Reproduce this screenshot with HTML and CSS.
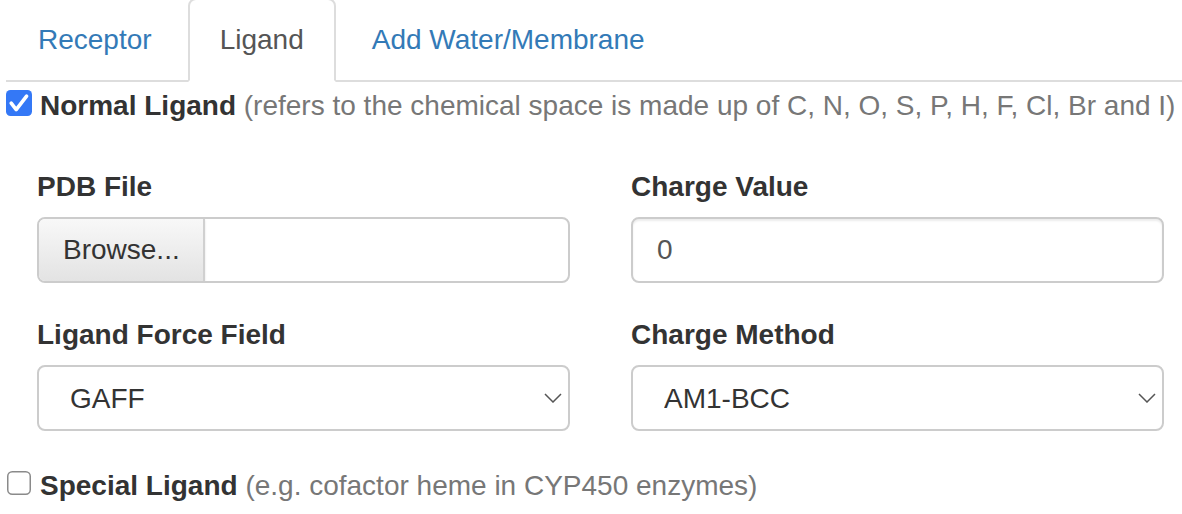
FILE: index.html
```html
<!DOCTYPE html>
<html lang="en">
<head>
<meta charset="utf-8">
<title>Ligand</title>
<link rel="stylesheet" href="styles.css">
</head>
<body>
<div class="page">
  <ul class="tabs">
    <li class="tab"><a href="#">Receptor</a></li>
    <li class="tab active"><a href="#">Ligand</a></li>
    <li class="tab"><a href="#">Add Water/Membrane</a></li>
  </ul>

  <div class="check-line">
    <svg class="cb cb-on" width="26" height="26" viewBox="0 0 26 26" aria-hidden="true">
      <rect x="0" y="0" width="26" height="26" rx="4.5" fill="#3478f6"/>
      <path d="M5.2 13.2 L10.2 19.6 L20.6 6.2" fill="none" stroke="#fff" stroke-width="3.6" stroke-linecap="round" stroke-linejoin="round"/>
    </svg>
    <span class="check-text"><b>Normal Ligand</b> <span class="muted">(refers to the chemical space is made up of C, N, O, S, P, H, F, Cl, Br and I)</span></span>
  </div>

  <div class="form-grid">
    <div class="group">
      <label class="lbl">PDB File</label>
      <div class="file-input">
        <span class="browse">Browse...</span>
        <span class="file-name"></span>
      </div>
    </div>
    <div class="group">
      <label class="lbl">Charge Value</label>
      <input class="control" type="text" value="0">
    </div>
    <div class="group">
      <label class="lbl">Ligand Force Field</label>
      <div class="select-wrap">
        <select class="control select"><option>GAFF</option></select>
        <svg class="chev" width="18" height="10" viewBox="0 0 18 10" aria-hidden="true">
          <path d="M1 1 L9 9 L17 1" fill="none" stroke="#555" stroke-width="1.5"/>
        </svg>
      </div>
    </div>
    <div class="group">
      <label class="lbl">Charge Method</label>
      <div class="select-wrap">
        <select class="control select"><option>AM1-BCC</option></select>
        <svg class="chev" width="18" height="10" viewBox="0 0 18 10" aria-hidden="true">
          <path d="M1 1 L9 9 L17 1" fill="none" stroke="#555" stroke-width="1.5"/>
        </svg>
      </div>
    </div>
  </div>

  <div class="check-line special">
    <svg class="cb cb-off" width="26" height="26" viewBox="0 0 26 26" aria-hidden="true">
      <rect x="1.75" y="1.75" width="22.5" height="22.5" rx="4.5" fill="#fff" stroke="#8a8a8a" stroke-width="1.5"/>
    </svg>
    <span class="check-text"><b>Special Ligand</b> <span class="muted">(e.g. cofactor heme in CYP450 enzymes)</span></span>
  </div>
</div>
</body>
</html>
```

FILE: styles.css
```css
html, body {
  margin: 0;
  padding: 0;
  background: #fff;
}

body {
  font-family: "Liberation Sans", Arial, Helvetica, sans-serif;
  font-size: 28px;
  line-height: 40px;
  color: #333;
  overflow: hidden;
}

.page {
  padding-left: 6px;
}

.tabs {
  display: flex;
  list-style: none;
  margin: -2px 0 0 0;
  padding: 0;
  border-bottom: 2px solid #ddd;
}

.tab {
  margin-bottom: -2px;
}

.tab a {
  display: block;
  padding: 20px 30px;
  margin-right: 4px;
  border: 2px solid transparent;
  border-radius: 8px 8px 0 0;
  color: #337ab7;
  text-decoration: none;
  line-height: 40px;
}

.tab.active a {
  color: #555;
  background: #fff;
  border-color: #ddd #ddd transparent #ddd;
}

.check-line {
  display: flex;
  align-items: flex-start;
  margin-top: 4px;
  white-space: nowrap;
}

.cb {
  flex: none;
  margin-top: 4px;
  margin-right: 8px;
}

.cb-off {
  margin-top: 4px;
  margin-left: 0;
}

.check-text b {
  font-weight: bold;
  color: #333;
}

.muted {
  color: #777;
}

.form-grid {
  display: grid;
  grid-template-columns: 533px 533px;
  column-gap: 61px;
  row-gap: 32px;
  margin: 41px 0 0 31px;
}

.lbl {
  display: block;
  font-weight: bold;
  margin-bottom: 10px;
  line-height: 40px;
}

.control {
  display: block;
  box-sizing: border-box;
  width: 100%;
  height: 66px;
  margin: 0;
  padding: 0 24px;
  border: 2px solid #ccc;
  border-radius: 8px;
  background: #fff;
  font-family: inherit;
  font-size: 28px;
  color: #555;
  box-shadow: inset 0 2px 2px rgba(0, 0, 0, 0.075);
  outline: none;
}

.file-input {
  display: flex;
  box-sizing: border-box;
  height: 66px;
  border: 2px solid #ccc;
  border-radius: 8px;
  overflow: hidden;
  background: #fff;
}

.browse {
  display: flex;
  align-items: center;
  padding: 0 24px;
  width: 116px;
  background: linear-gradient(#f8f8f8, #e3e3e3);
  border-right: 2px solid #d0d0d0;
  color: #333;
  box-shadow: 0 1px 2px rgba(0, 0, 0, 0.12);
}

.file-name {
  flex: 1;
}

.select-wrap {
  position: relative;
}

.select {
  -webkit-appearance: none;
  appearance: none;
  padding-left: 31px;
  box-shadow: none;
  color: #333;
}

.chev {
  position: absolute;
  right: 8px;
  top: 28px;
  pointer-events: none;
}

.special {
  margin-top: 35px;
}

.cb-off + .check-text {
  margin-left: 0;
}
```
